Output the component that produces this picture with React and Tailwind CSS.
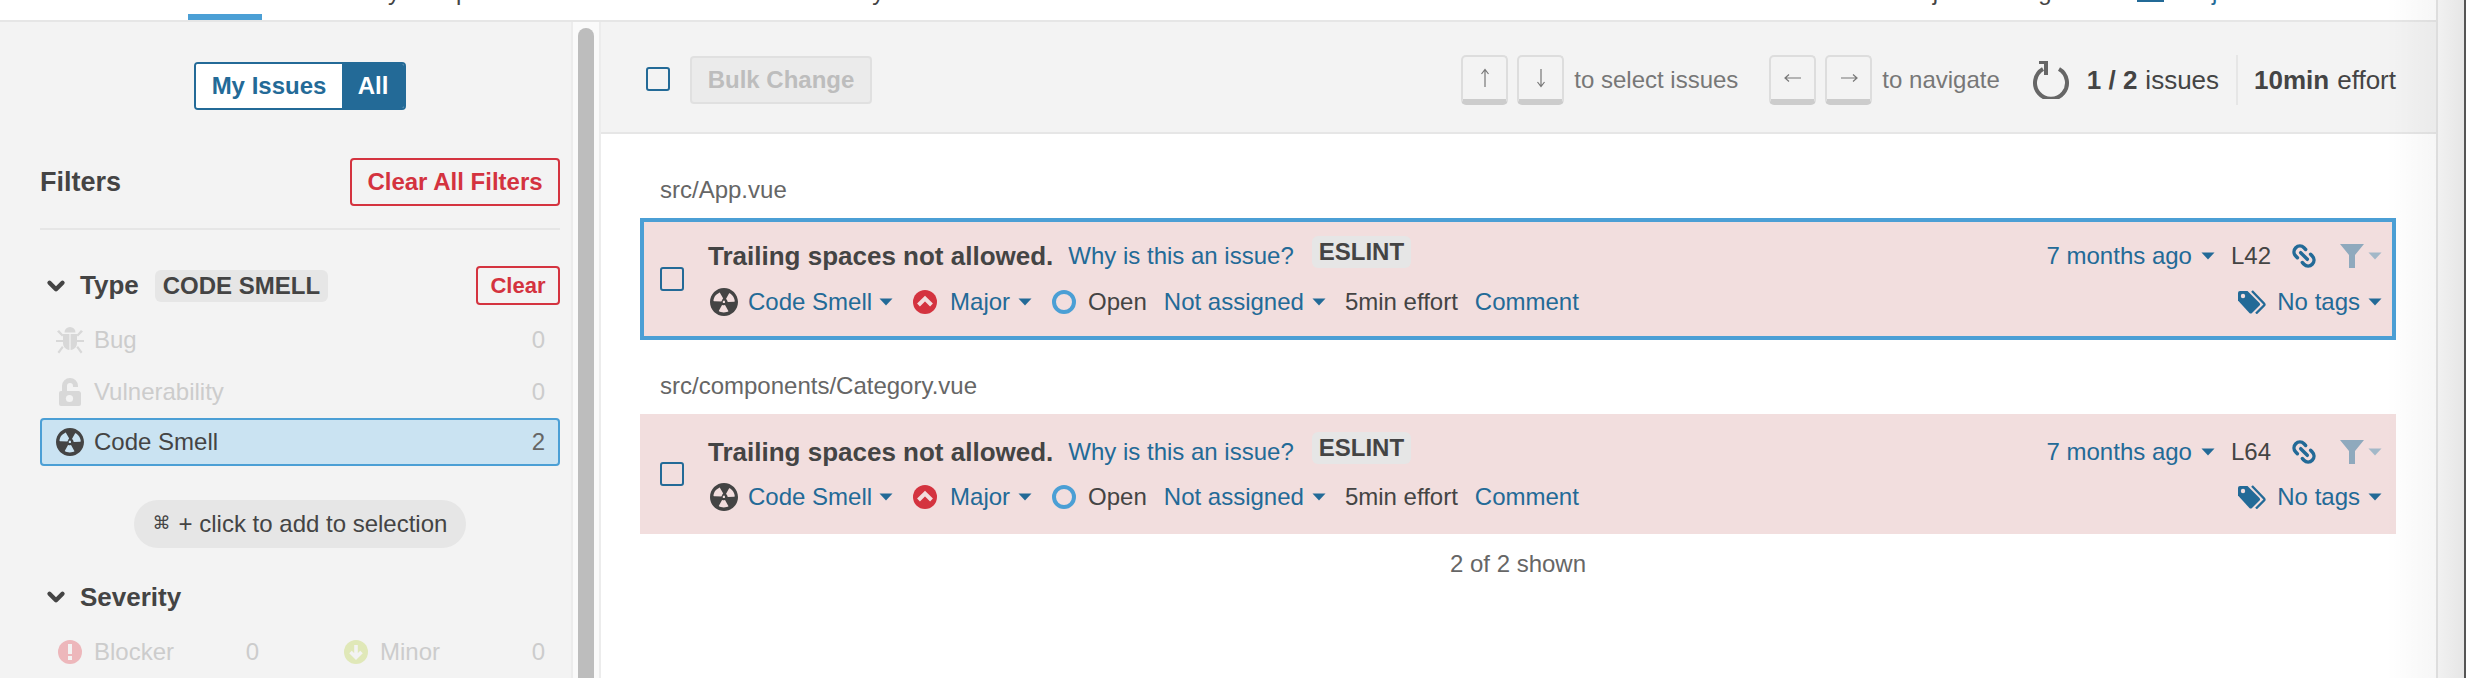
import React from 'react';
import { ChevronDown, Link2 } from 'lucide-react';

const FONT = "font-['Liberation_Sans',Arial,sans-serif]";

function Caret({ className = 'text-[#236a97]' }) {
  return (
    <svg width="14" height="8" viewBox="0 0 14 8" className={`shrink-0 ${className}`}>
      <path d="M0.5 0.5H13.5L7 7.5Z" fill="currentColor" />
    </svg>
  );
}

function CodeSmellIcon() {
  return (
    <svg width="28" height="28" viewBox="2 2 12 12" className="shrink-0">
      <path
        fill="#444444"
        fillRule="evenodd"
        d="M8 2C4.7 2 2 4.7 2 8s2.7 6 6 6 6-2.7 6-6-2.7-6-6-6zm-.5 5.5h.9v.9h-.9v-.9zm-3.8.2c-.1 0-.2-.1-.2-.2 0-.4.1-1.2.6-2S5.7 4.2 6 4c.1-.1.2 0 .3.1l1.3 2.3c0 .1 0 .2-.1.2-.1.2-.2.3-.3.5-.1.2-.2.4-.2.5 0 .1-.1.2-.2.2l-2.7-.1zM9.9 12c-.3.2-1.1.5-2 .5-.9 0-1.7-.3-2-.5-.1 0-.1-.2-.1-.3l1.3-2.3c0-.1.1-.1.2-.1.2.1.3.1.5.1s.4 0 .5-.1c.1 0 .2 0 .2.1l1.3 2.3c.2.2.2.3.1.3zm2.5-4.1L9.7 8c-.1 0-.2-.1-.2-.2 0-.2-.1-.4-.2-.5 0-.2-.2-.3-.3-.5-.1 0-.1-.1-.1-.2l1.3-2.3c.1-.1.2-.1.3-.1.3.2 1 .7 1.5 1.5s.6 1.6.6 2c0 0-.1.1-.2.2z"
      />
    </svg>
  );
}

function BugIcon() {
  return (
    <svg width="28" height="28" viewBox="0 0 28 28" className="shrink-0" fill="#d8d8d8">
      <path d="M8.5 6.5 A5.5 5.5 0 0 1 19.5 6.5 Z" />
      <path d="M7 8h6.4v16C9.5 23.6 7 20.5 7 17Z" />
      <path d="M14.6 8H21v9c0 3.5-2.5 6.6-6.4 7Z" />
      <path d="M1 5.5l2-1.5 4.5 5-1.5 1.5ZM27 5.5l-2-1.5-4.5 5 1.5 1.5ZM0 14h7v2H0ZM21 14h7v2h-7ZM1.5 26l4.5-6 1.6 1.4-4.4 6ZM26.5 26l-4.5-6-1.6 1.4 4.4 6Z" />
    </svg>
  );
}

function LockIcon() {
  return (
    <svg width="24" height="28" viewBox="0 0 24 28" className="shrink-0">
      <path d="M4 13V8a8 8 0 0 1 16 0v1h-5V8a3 3 0 0 0-6 0v5h12a3 3 0 0 1 2 2v11a2 2 0 0 1-2 2H3a2 2 0 0 1-2-2V15a2 2 0 0 1 2-2Z" fill="#d8d8d8" />
      <circle cx="11.5" cy="20.5" r="3.6" fill="#f3f3f3" />
    </svg>
  );
}

function MajorIcon() {
  return (
    <svg width="24" height="24" viewBox="0 0 24 24" className="shrink-0">
      <circle cx="12" cy="12" r="12" fill="#d4333f" />
      <path d="M5.5 15 L12 8.5 L18.5 15" fill="none" stroke="#f2dede" strokeWidth="4" />
    </svg>
  );
}

function TagsIcon() {
  return (
    <svg width="28" height="24" viewBox="0 0 28 24" className="shrink-0">
      <path d="M0 3a2 2 0 0 1 2-2h7.5L21.5 13a2 2 0 0 1 0 2.6L14 23a2 2 0 0 1-2.6 0L0 10.5Z" fill="#236a97" />
      <circle cx="5" cy="6" r="2.2" fill="#f2dede" />
      <path d="M14 1 L26 13.5 a1.5 1.5 0 0 1 0 2 L18 23.5" fill="none" stroke="#236a97" strokeWidth="2.4" />
    </svg>
  );
}

function OpenIcon() {
  return <span className="w-6 h-6 shrink-0 rounded-full border-[4px] border-[#4b9fd5]" />;
}

function Checkbox() {
  return <span className="block w-6 h-6 shrink-0 rounded-[3px] border-2 border-[#236a97]" />;
}

function FilterItem({ icon, label, count, className = '' }) {
  return (
    <div className={`flex items-center h-12 pl-4 pr-[15px] text-[#cccccc] text-[24px] ${className}`}>
      <span className="w-[28px] flex justify-center shrink-0">{icon}</span>
      <span className="ml-2.5">{label}</span>
      <span className="ml-auto">{count}</span>
    </div>
  );
}

function IssueRow({ selected, line }) {
  return (
    <div className={`flex bg-[#f2dede] ${selected ? 'h-[122px] border-4 border-[#4b9fd5]' : 'h-[120px] pr-1'}`}>
      <div className={`flex items-center shrink-0 ${selected ? 'w-[64px] pl-4' : 'w-[68px] pl-5'}`}>
        <Checkbox />
      </div>
      <div className="flex-1 flex flex-col text-[24px] leading-[28px]">
        <div className={`flex items-center ${selected ? 'mt-[20px]' : 'mt-[24px]'}`}>
          <span className="font-bold text-[26px] text-[#444444]">Trailing spaces not allowed.</span>
          <span className="ml-[15px] text-[#236a97]">Why is this an issue?</span>
          <span className="ml-[18px] -mt-[8px] bg-[#e6e6e6] rounded-[6px] px-[7px] h-8 flex items-center font-bold text-[#444444]">ESLINT</span>
          <div className="ml-auto flex items-center">
            <span className="text-[#236a97]">7 months ago</span>
            <span className="ml-[9px]"><Caret /></span>
            <span className="ml-4 text-[#444444]">{line}</span>
            <Link2 size={28} strokeWidth={3} className="ml-[19px] text-[#236a97] rotate-45" />
            <svg width="24" height="24" viewBox="0 0 24 24" className="ml-[22px] shrink-0">
              <path d="M0 0H24L15 11V24H9V11Z" fill="#8fa9bd" />
            </svg>
            <span className="ml-1 mr-[10px]"><Caret className="text-[#a3b8c8]" /></span>
          </div>
        </div>
        <div className={`flex items-center ${selected ? 'mt-[18px]' : 'mt-[17px]'}`}>
          <span className="ml-[2px]"><CodeSmellIcon /></span>
          <span className="ml-2.5 text-[#236a97]">Code Smell</span>
          <span className="ml-[7px]"><Caret /></span>
          <span className="ml-5"><MajorIcon /></span>
          <span className="ml-[13px] text-[#236a97]">Major</span>
          <span className="ml-2"><Caret /></span>
          <span className="ml-5 flex"><OpenIcon /></span>
          <span className="ml-3 text-[#444444]">Open</span>
          <span className="ml-[17px] text-[#236a97]">Not assigned</span>
          <span className="ml-2"><Caret /></span>
          <span className="ml-[19px] text-[#444444]">5min effort</span>
          <span className="ml-[17px] text-[#236a97]">Comment</span>
          <div className="ml-auto flex items-center">
            <TagsIcon />
            <span className="ml-[11px] text-[#236a97]">No tags</span>
            <span className="ml-2 mr-[10px]"><Caret /></span>
          </div>
        </div>
      </div>
    </div>
  );
}

function Key({ d }) {
  return (
    <span className="w-[47px] h-[50px] flex items-center justify-center rounded-[5px] border-2 border-b-[6px] border-[#dddddd] border-b-[#cccccc] bg-[#f3f3f3]">
      <svg width="20" height="20" viewBox="0 0 20 20">
        <path d={d} fill="none" stroke="#777777" strokeWidth="1.2" />
      </svg>
    </span>
  );
}

export default function App() {
  return (
    <div className={`${FONT} w-[2466px] h-[678px] overflow-hidden flex bg-white text-[#444444]`}>
      <div className="relative flex-1 min-w-0 flex flex-col">
        {/* nav, only its bottom edge is on screen */}
        <div className="relative h-[22px] shrink-0 border-b-2 border-[#e6e6e6] flex overflow-hidden text-[24px] leading-[28px] whitespace-nowrap">
          <div className="flex gap-12 pl-12 -mt-[22px] self-start">
            <span>Overview</span>
            <span>Issues</span>
            <span>Security Hotspots</span>
            <span>Measures</span>
            <span>Code</span>
            <span>Activity</span>
          </div>
          <div className="ml-auto flex -mt-[22px] self-start mr-[60px]">
            <span>Project Settings</span>
            <span className="ml-[73px] w-[27px] h-[24px] border-b-2 border-[#236a97]" />
            <span className="ml-[11px] text-[#236a97]">Project Information</span>
          </div>
          <span className="absolute left-[188px] bottom-0 w-[74px] h-[6px] bg-[#4b9fd5]" />
        </div>

        <div className="flex flex-1 min-h-0">
          {/* sidebar */}
          <div className="w-[571px] shrink-0 bg-[#f3f3f3] pl-10 pr-[11px] flex flex-col">
            <div className="flex justify-center mt-10">
              <div className="flex h-12 rounded-[4px] overflow-hidden border-2 border-[#236a97] text-[24px] font-bold">
                <span className="w-[146px] bg-white text-[#236a97] flex items-center justify-center">My Issues</span>
                <span className="w-[62px] bg-[#236a97] text-white flex items-center justify-center">All</span>
              </div>
            </div>

            <div className="flex items-center justify-between mt-12 h-12">
              <span className="font-bold text-[27px] text-[#444444]">Filters</span>
              <span className="w-[210px] h-12 flex items-center justify-center border-2 border-[#d4333f] rounded-[4px] font-bold text-[24px] text-[#d4333f]">Clear All Filters</span>
            </div>
            <div className="h-[2px] shrink-0 bg-[#e6e6e6] mt-[22px]" />

            <div className="flex items-center mt-9 h-[39px] shrink-0">
              <ChevronDown size={26} strokeWidth={4} className="ml-[3px] text-[#444444]" />
              <span className="ml-[11px] font-bold text-[26px]">Type</span>
              <span className="ml-4 h-8 px-2 flex items-center bg-[#e6e6e6] rounded-[6px] font-bold text-[24px] whitespace-nowrap">CODE SMELL</span>
              <span className="ml-auto w-[84px] h-[39px] flex items-center justify-center border-2 border-[#d4333f] rounded-[4px] font-bold text-[22px] text-[#d4333f]">Clear</span>
            </div>

            <div className="flex flex-col mt-[11px] shrink-0">
              <FilterItem icon={<BugIcon />} label="Bug" count="0" />
              <FilterItem className="mt-1" icon={<LockIcon />} label="Vulnerability" count="0" />
              <div className="mt-[2px] flex items-center h-12 pl-[14px] pr-[13px] rounded-[4px] border-2 border-[#4b9fd5] bg-[#cae3f2] text-[24px]">
                <CodeSmellIcon />
                <span className="ml-2.5">Code Smell</span>
                <span className="ml-auto text-[#666666]">2</span>
              </div>
            </div>

            <div className="flex justify-center mt-[34px] shrink-0">
              <span className="h-12 w-[332px] rounded-full bg-[#e6e6e6] flex items-center justify-center text-[24px] whitespace-nowrap">
                <span className="text-[18px] -mt-1 mr-2 font-['DejaVu_Sans']">⌘</span>+ click to add to selection
              </span>
            </div>

            <div className="flex items-center mt-[33px] h-8 shrink-0">
              <ChevronDown size={26} strokeWidth={4} className="ml-[3px] text-[#444444]" />
              <span className="ml-[11px] font-bold text-[26px]">Severity</span>
            </div>

            <div className="flex mt-[15px] shrink-0">
              <FilterItem
                className="w-[234px]"
                label="Blocker"
                count="0"
                icon={
                  <svg width="24" height="24" viewBox="0 0 24 24">
                    <circle cx="12" cy="12" r="12" fill="#edb7bb" />
                    <rect x="10" y="4" width="4" height="10" fill="#f3f3f3" />
                    <rect x="10" y="16" width="4" height="4" fill="#f3f3f3" />
                  </svg>
                }
              />
              <FilterItem
                className="flex-1 ml-[52px]"
                label="Minor"
                count="0"
                icon={
                  <svg width="24" height="24" viewBox="0 0 24 24">
                    <circle cx="12" cy="12" r="12" fill="#e0e8b8" />
                    <path d="M12 5v12M6.5 12l5.5 5.5 5.5-5.5" fill="none" stroke="#f3f3f3" strokeWidth="3.6" />
                  </svg>
                }
              />
            </div>
          </div>

          {/* sidebar scrollbar */}
          <div className="w-[30px] shrink-0 bg-[#fafafa] border-x-2 border-[#ececec] pl-[5px] pt-[6px]">
            <div className="w-4 h-[700px] rounded-t-full bg-[#bdbdbd]" />
          </div>

          {/* main */}
          <div className="flex-1 flex flex-col min-w-0">
            <div className="h-[112px] shrink-0 bg-[#f3f3f3] border-b-2 border-[#e6e6e6] flex items-center pt-1 pl-[45px] pr-[40px] text-[24px]">
              <Checkbox />
              <span className="ml-5 mt-[2px] w-[182px] h-12 flex items-center justify-center rounded-[4px] border-2 border-[#e0e0e0] bg-[#ebebeb] font-bold text-[#bdbdbd]">Bulk Change</span>
              <div className="ml-auto mt-[2px] flex items-center">
                <Key d="M10 19V2M6.5 6L10 1.5 13.5 6" />
                <span className="ml-[9px]"><Key d="M10 1v17M6.5 14l3.5 4.5 3.5-4.5" /></span>
                <span className="ml-[10px] text-[#777777]">to select issues</span>
                <span className="ml-[31px]"><Key d="M18 10H2M6 6.5L2 10l4 3.5" /></span>
                <span className="ml-[9px]"><Key d="M2 10h16M14 6.5l4 3.5-4 3.5" /></span>
                <span className="ml-[10px] text-[#777777]">to navigate</span>
                <svg width="38" height="38" viewBox="0 0 38 38" className="ml-8 shrink-0">
                  <path d="M11 8 A16 16 0 1 0 27 8" fill="none" stroke="#666666" strokeWidth="4" />
                  <path d="M7 1H14V14" fill="none" stroke="#666666" strokeWidth="4" />
                </svg>
                <span className="ml-[17px] font-bold text-[26px]">1 / 2</span>
                <span className="ml-2 text-[26px]">issues</span>
                <span className="ml-[17px] w-[2px] h-[50px] bg-[#e6e6e6]" />
                <span className="ml-4 font-bold text-[26px]">10min</span>
                <span className="ml-2 text-[26px]">effort</span>
              </div>
            </div>

            <div className="flex-1 flex flex-col pl-[39px] pr-[40px] text-[24px]">
              <div className="ml-[20px] mt-[40px] h-8 flex items-center text-[#666666]">src/App.vue</div>
              <div className="mt-[12px]">
                <IssueRow selected line="L42" />
              </div>
              <div className="ml-[20px] mt-[30px] h-8 flex items-center text-[#666666]">src/components/Category.vue</div>
              <div className="mt-[12px]">
                <IssueRow line="L64" />
              </div>
              <div className="mt-[16px] leading-[28px] text-center text-[#666666]">2 of 2 shown</div>
            </div>
          </div>
        </div>

        {/* soft fade next to the window edge */}
        <div className="absolute top-0 bottom-0 right-0 w-[50px] pointer-events-none bg-linear-to-r from-transparent to-black/[0.035]" />
      </div>

      {/* window edge */}
      <div className="w-[30px] shrink-0 border-l-2 border-l-[#dddddd] border-r-2 border-r-[#555555] bg-linear-to-r from-[#f1f1f1] to-[#e6e6e6]" />
    </div>
  );
}
